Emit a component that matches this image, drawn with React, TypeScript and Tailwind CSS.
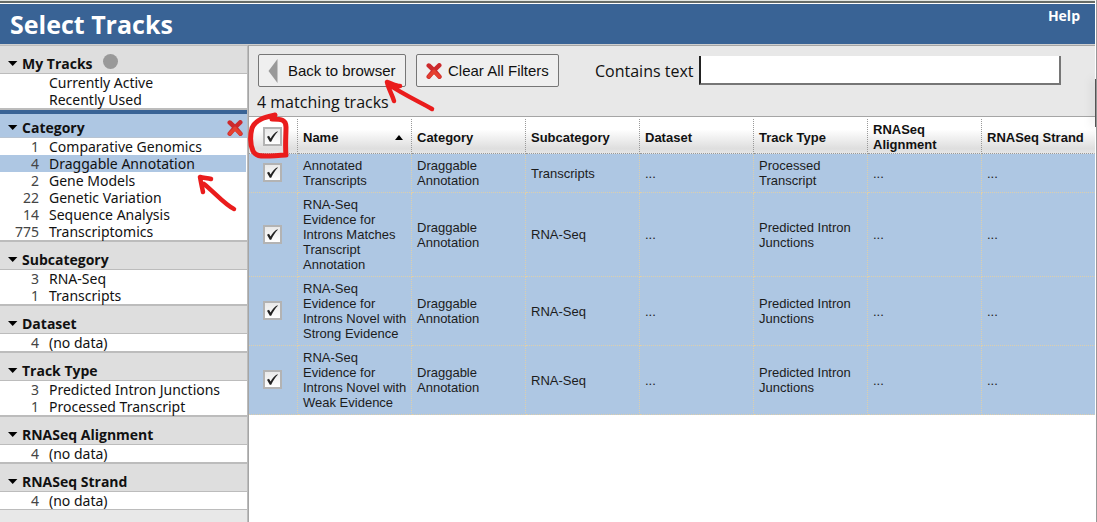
import React from "react";

type Item = { count?: number; label: string; selected?: boolean };
type Section = { title: string; items: Item[]; active?: boolean; dot?: boolean };

const sections: Section[] = [
  { title: "My Tracks", dot: true, items: [{ label: "Currently Active" }, { label: "Recently Used" }] },
  {
    title: "Category",
    active: true,
    items: [
      { count: 1, label: "Comparative Genomics" },
      { count: 4, label: "Draggable Annotation", selected: true },
      { count: 2, label: "Gene Models" },
      { count: 22, label: "Genetic Variation" },
      { count: 14, label: "Sequence Analysis" },
      { count: 775, label: "Transcriptomics" },
    ],
  },
  { title: "Subcategory", items: [{ count: 3, label: "RNA-Seq" }, { count: 1, label: "Transcripts" }] },
  { title: "Dataset", items: [{ count: 4, label: "(no data)" }] },
  {
    title: "Track Type",
    items: [
      { count: 3, label: "Predicted Intron Junctions" },
      { count: 1, label: "Processed Transcript" },
    ],
  },
  { title: "RNASeq Alignment", items: [{ count: 4, label: "(no data)" }] },
  { title: "RNASeq Strand", items: [{ count: 4, label: "(no data)" }] },
];

const columns = ["Name", "Category", "Subcategory", "Dataset", "Track Type", "RNASeq Alignment", "RNASeq Strand"];

const rows = [
  ["Annotated Transcripts", "Draggable Annotation", "Transcripts", "...", "Processed Transcript", "...", "..."],
  ["RNA-Seq Evidence for Introns Matches Transcript Annotation", "Draggable Annotation", "RNA-Seq", "...", "Predicted Intron Junctions", "...", "..."],
  ["RNA-Seq Evidence for Introns Novel with Strong Evidence", "Draggable Annotation", "RNA-Seq", "...", "Predicted Intron Junctions", "...", "..."],
  ["RNA-Seq Evidence for Introns Novel with Weak Evidence", "Draggable Annotation", "RNA-Seq", "...", "Predicted Intron Junctions", "...", "..."],
];

function Cross() {
  return (
    <svg width="16" height="16" viewBox="0 0 16 16" fill="none" strokeLinecap="round" aria-hidden="true">
      <path d="M2.8 2.6C6 5.4 10 9.4 13.4 13.6M13.2 2.4C9.4 5.8 5.8 9.6 2.8 13.6" stroke="#cc2a2d" strokeWidth="4.6" />
      <path d="M7.6 8.6 13.2 13.6M8.2 8.4 3 13.4" stroke="#e5402f" strokeWidth="3.4" />
    </svg>
  );
}

function Caret() {
  return (
    <svg width="10" height="6" viewBox="0 0 10 6" aria-hidden="true">
      <path d="M0 0H9.4L4.7 5Z" fill="#000" />
    </svg>
  );
}

function Check({ label }: { label: string }) {
  return (
    <span className="relative mx-auto block h-[19px] w-[19px]">
      <input type="checkbox" defaultChecked aria-label={label} className="peer block h-full w-full appearance-none border-2 border-[#b3b3b3] bg-linear-to-b from-[#e9e9e9] to-white" />
      <svg className="pointer-events-none absolute inset-0 hidden peer-checked:block" width="19" height="19" viewBox="0 0 19 19" aria-hidden="true">
        <path d="M4 9.8 6 8.8 7.6 11.4C9.3 8.4 11.6 5.6 14.4 4.2L14.8 4.8C12.2 7.4 10.2 10.7 8.2 14.8L6.8 14.8Z" fill="#222" />
      </svg>
    </span>
  );
}

function SidebarSection({ section }: { section: Section }) {
  return (
    <section className="border-b-2 border-[#bcbcbc] last:border-b">
      <h2
        className={
          section.active
            ? "flex h-7 items-end border-t-4 border-b border-t-[#396395] border-b-[#b8c4d2] bg-[#aec7e3] pl-2"
            : "flex h-7 items-end border-b border-[#bcbcbc] bg-[#dedede] pl-2"
        }
      >
        <button type="button" className="flex items-center gap-1 text-sm leading-[18px] font-bold">
          <Caret />
          {section.title}
        </button>
        {section.dot && <span className="mb-1 ml-[10px] h-[15px] w-[15px] rounded-full bg-[#999]" />}
        {section.active && (
          <button type="button" aria-label="Clear category filter" className="mr-1 mb-px ml-auto">
            <Cross />
          </button>
        )}
      </h2>
      <ul className="bg-white font-['Noto_Sans',sans-serif]">
        {section.items.map((item) => (
          <li key={item.label}>
            <a href="#" className={item.selected ? "mr-px flex gap-[10px] bg-[#aec7e3] leading-[17px]" : "flex gap-[10px] leading-[17px]"}>
              <span className="w-[39px] text-right text-[#444]">{item.count}</span>
              {item.label}
            </a>
          </li>
        ))}
      </ul>
    </section>
  );
}

export default function App() {
  return (
    <div className="relative min-h-screen border-r border-[#999] bg-[#e8e8e8] font-['Open_Sans','Noto_Sans',sans-serif] text-sm text-[#111]">
      <div className="flex min-h-screen flex-col border-r border-white">
        <div className="h-1 border-t border-b border-t-[#e4e8e4] border-b-white bg-[#666b66]" />
        <header className="flex h-10 items-start justify-between bg-[#396395] pr-[15px] pl-[10px] text-white">
          <h1 className="text-[25px] leading-10 font-bold">Select Tracks</h1>
          <a href="#" className="text-sm leading-6 font-bold">Help</a>
        </header>
        <div className="flex flex-1 border-t border-[#cfcfcf]">
          <aside className="w-[248px] shrink-0 border-t border-r border-[#bcbcbc]">
            {sections.map((section) => (
              <SidebarSection key={section.title} section={section} />
            ))}
          </aside>
          <main className="flex min-w-0 flex-1 flex-col border-t border-l border-[#a5a5a5]">
            <div className="h-[71px] border-b border-[#a5a5a5] px-2 pt-2">
              <div className="flex items-center">
                <button type="button" className="ml-px flex h-[33px] w-[148px] items-center gap-[10px] rounded-xs border border-[#767676] bg-[#efefef] pt-px pl-[9px] font-['Liberation_Sans',sans-serif] text-[15px]">
                  <svg width="10" height="24" viewBox="0 0 10 24" aria-hidden="true">
                    <path d="M9.5 0V24L.5 12Z" fill="#999" />
                  </svg>
                  Back to browser
                </button>
                <button type="button" className="ml-[10px] flex h-[33px] w-[143px] items-center gap-[6px] rounded-xs border border-[#767676] bg-[#efefef] pt-px pl-[9px] font-['Liberation_Sans',sans-serif] text-[15px]">
                  <Cross />
                  Clear All Filters
                </button>
                <label htmlFor="text-filter" className="ml-9 text-base">Contains text</label>
                <input id="text-filter" type="text" className="mr-[26px] ml-[5px] h-[29px] min-w-0 flex-1 border-r-2 border-b-2 border-l-2 border-r-[#767676] border-b-[#767676] border-l-[#222] bg-white px-1 outline-none" />
              </div>
              <p className="pt-[3px] text-base leading-6">4 matching tracks</p>
            </div>
            <div className="flex-1 bg-white pt-0.5">
              <table className="w-full table-fixed border-separate border-spacing-0 font-['Liberation_Sans',sans-serif] text-[13px] leading-[15px]">
                <colgroup>
                  <col className="w-[49px]" />
                  <col className="w-[114px]" span={6} />
                  <col />
                </colgroup>
                <thead>
                  <tr className="h-[35px] bg-linear-to-b from-white from-30% via-[#dedede] via-85% to-[#e8e8e8]">
                    <th className="border-r border-b border-dotted border-[#999] py-0 pr-0.5 pl-0">
                      <Check label="Select all tracks" />
                    </th>
                    {columns.map((name) => (
                      <th key={name} className="border-r border-b border-dotted border-[#999] pt-[3px] pr-1 pb-px pl-[5px] text-left align-middle font-bold last:border-r-transparent">
                        {name === "Name" ? (
                          <button type="button" className="flex w-full items-center justify-between pr-1">
                            Name
                            <svg width="8" height="5" viewBox="0 0 8 5" aria-hidden="true">
                              <path d="M4 0 8 5H0Z" fill="#000" />
                            </svg>
                          </button>
                        ) : (
                          name
                        )}
                      </th>
                    ))}
                  </tr>
                </thead>
                <tbody>
                  {rows.map((row) => (
                    <tr key={row[0]} className="bg-[#aec7e3]">
                      <td className="border-r border-b border-dotted border-[#ddcfac] pt-0 pr-0.5 pb-px pl-0">
                        <Check label={row[0]} />
                      </td>
                      {row.map((cell, i) => (
                        <td key={i} className="border-r border-b border-dotted border-[#ddcfac] py-1 pr-0.5 pl-[5px] align-middle text-[#1c1c1c] last:border-r-transparent">
                          {cell}
                        </td>
                      ))}
                    </tr>
                  ))}
                </tbody>
              </table>
            </div>
          </main>
        </div>
      </div>
      <div className="absolute top-[79px] right-0 h-12 w-px bg-[#555] shadow-[-2px_0_8px_rgba(0,0,0,0.35)]" />
      <svg className="pointer-events-none absolute top-0 left-0" width="450" height="220" viewBox="0 0 450 220" fill="none" stroke="#ea1c1c" strokeWidth="5" strokeLinecap="round" strokeLinejoin="round" aria-hidden="true">
        <path d="M432 109C420 102 404 95 388 84M400 86C396 86 391 83 387 82C388 88 392 94 394 101" strokeWidth="4.5" />
        <path d="M234 209C225 205 213 191 204 184M211 179C208 178 203 178 200 177C201 183 202 187 203 192" strokeWidth="4.5" />
        <path d="M275 115C266 117 256 119 252 128C250 136 250 144 253 151C256 157 262 156 270 156C277 156 283 155 286 155C285 146 286 136 286 127C286 120 282 119 272 119" />
      </svg>
    </div>
  );
}
